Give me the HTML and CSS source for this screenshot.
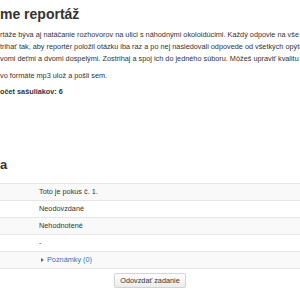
FILE: index.html
```html
<!DOCTYPE html>
<html lang="sk">
<head>
<meta charset="utf-8">
<title>Nahrávame reportáž</title>
<link rel="stylesheet" href="styles.css">
</head>
<body>
<div class="page">
  <h2 class="title">me reportáž</h2>
  <div class="intro">
    <p class="para">
      <span class="line">rtáže býva aj natáčanie rozhovorov na ulici s náhodnými okoloidúcimi. Každý odpovie na vše</span>
      <span class="line">trihať tak, aby reportér položil otázku iba raz a po nej nasledovali odpovede od všetkých opýta</span>
      <span class="line">vomi deťmi a dvomi dospelými. Zostrihaj a spoj ich do jedného súboru. Môžeš upraviť kvalitu z</span>
    </p>
    <p class="para">vo formáte mp3 ulož a pošli sem.</p>
    <p class="para strong">očet sašuliakov: 6</p>
  </div>
  <h3 class="section">a</h3>
  <table class="status">
    <tr class="odd"><th></th><td>Toto je pokus č. 1.</td></tr>
    <tr><th></th><td>Neodovzdané</td></tr>
    <tr class="odd"><th></th><td>Nehodnotené</td></tr>
    <tr><th></th><td>-</td></tr>
    <tr class="odd"><th></th><td><span class="caret"></span><a class="notes" href="#">Poznámky (0)</a></td></tr>
  </table>
  <div class="actions">
    <button class="btn" type="button">Odovzdať zadanie</button>
  </div>
</div>
</body>
</html>
```
FILE: styles.css
```css
html, body {
  margin: 0;
  padding: 0;
  background: #fff;
}
body {
  font-family: "Liberation Sans", Arial, sans-serif;
  color: #333;
  font-size: 7.3px;
  line-height: 12px;
  overflow: hidden;
}
.page {
  width: 300px;
}
.title {
  margin: 6px 0 0 0;
  font-size: 14px;
  line-height: 16px;
  font-weight: bold;
  color: #333;
}
.intro {
  margin-top: 7px;
}
.para {
  margin: 0 0 5px 0;
}
.para + .para {
  margin-bottom: 4px;
}
.line {
  display: block;
  white-space: nowrap;
  overflow: hidden;
}
.strong {
  font-weight: bold;
}
.section {
  margin: 59px 0 0 0;
  font-size: 13px;
  line-height: 16px;
  font-weight: bold;
}
.status {
  margin-top: 10px;
  width: 100%;
  border-collapse: collapse;
}
.status th {
  width: 36px;
  padding: 0;
}
.status th, .status td {
  border-top: 1px solid #e6e6e6;
  height: 16px;
  line-height: 10px;
  vertical-align: middle;
}
.status td {
  padding: 0 0 0 3px;
  text-align: left;
}
.status tr:last-child th, .status tr:last-child td {
  border-bottom: 1px solid #e6e6e6;
}
.status .odd th, .status .odd td {
  background: #f9f9f9;
}
.caret {
  display: inline-block;
  width: 0;
  height: 0;
  border-top: 2.5px solid transparent;
  border-bottom: 2.5px solid transparent;
  border-left: 3px solid #666;
  margin: 0 3px 0 2px;
  vertical-align: 0;
}
.notes {
  color: #2a7ab0;
  text-decoration: none;
}
.actions {
  margin-top: 4px;
  text-align: center;
}
.btn {
  font-family: "Liberation Sans", Arial, sans-serif;
  font-size: 7.3px;
  line-height: 10px;
  color: #333;
  padding: 2px 5px;
  height: 15px;
  white-space: nowrap;
  border: 1px solid #d4d4d4;
  border-radius: 2px;
  background: linear-gradient(#ffffff, #ececec);
  box-shadow: 0 1px 1px rgba(0,0,0,0.08);
}
```
